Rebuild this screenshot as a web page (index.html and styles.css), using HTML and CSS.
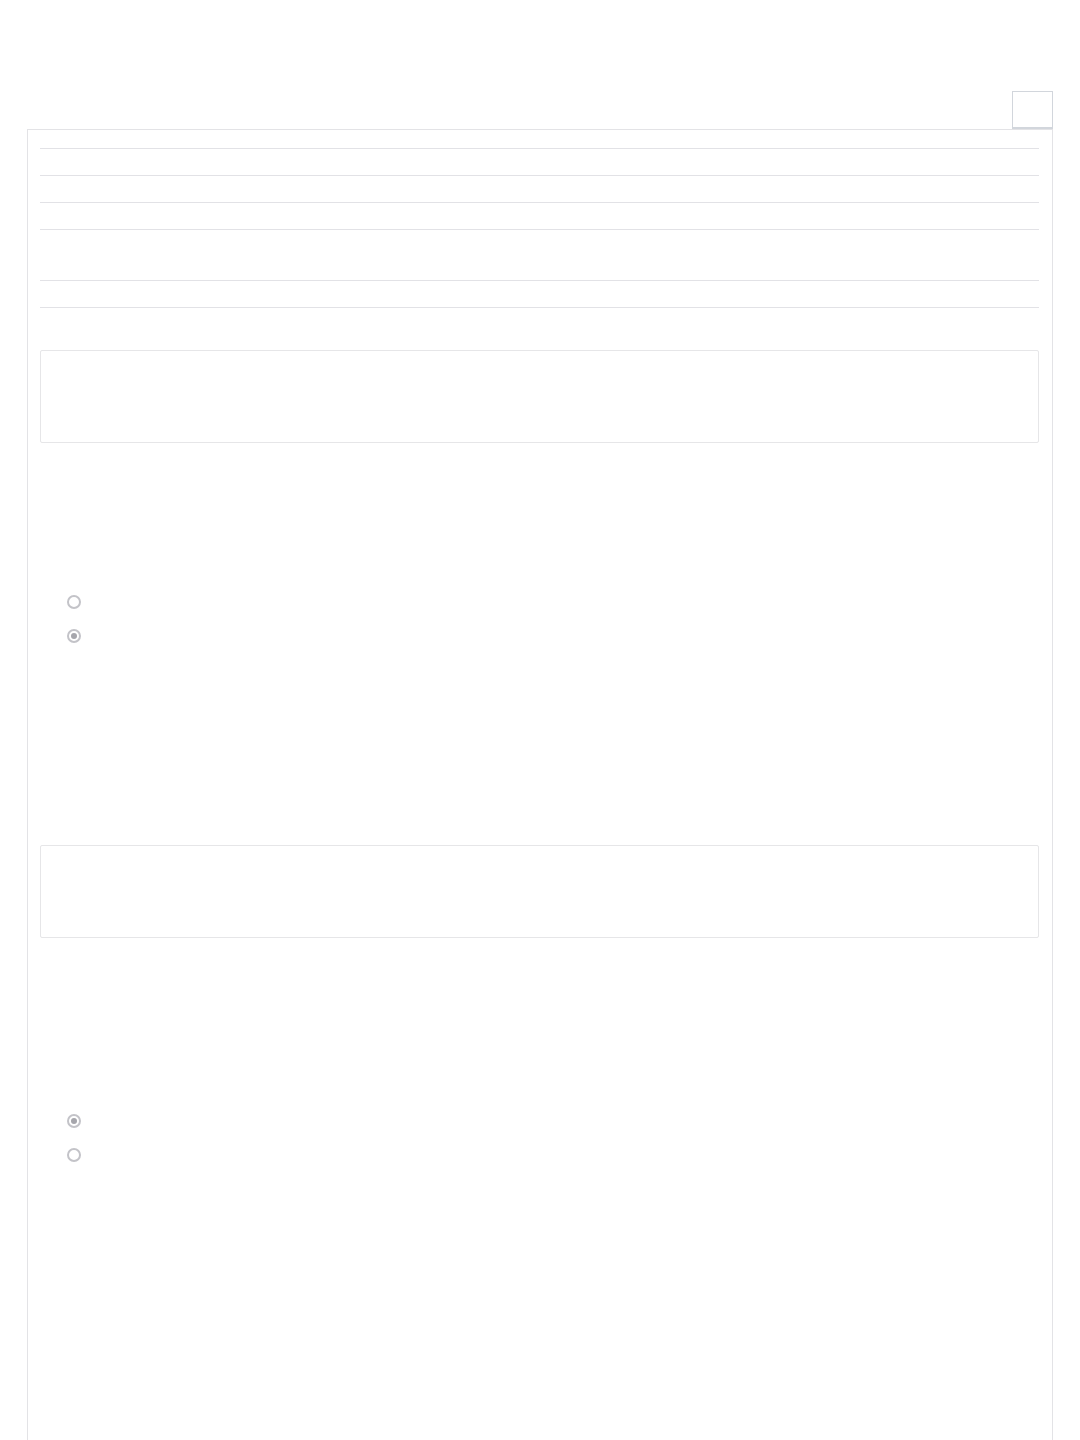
FILE: index.html
```html
<!DOCTYPE html>
<html lang="en">
<head>
	<meta charset="UTF-8">
	<meta name="viewport" content="width=device-width, initial-scale=1.0">
	<title>Form</title>
	<link rel="stylesheet" href="styles.css">
</head>
<body>
	<div class="tabs">
		<div class="tab"></div>
	</div>

	<div class="panel">
		<div class="rows">
			<div class="row row-head"></div>
			<div class="row"></div>
			<div class="row"></div>
			<div class="row"></div>
			<div class="row row-tall"></div>
			<div class="row"></div>
		</div>

		<div class="box"></div>

		<div class="choices first">
			<label class="choice"><input type="radio" name="q1" disabled></label>
			<label class="choice"><input type="radio" name="q1" checked disabled></label>
		</div>

		<div class="box box-second"></div>

		<div class="choices second">
			<label class="choice"><input type="radio" name="q2" checked disabled></label>
			<label class="choice"><input type="radio" name="q2" disabled></label>
		</div>
	</div>
</body>
</html>
```

FILE: styles.css
```css
*,
*::before,
*::after {
	box-sizing: border-box;
}
body {
	margin: 0;
	background: #fff;
	font-family: "Liberation Sans", Arial, sans-serif;
	font-size: 14px;
}

.tabs {
	display: flex;
	justify-content: flex-end;
	padding: 91px 27px 0;
}
.tab {
	width: 41px;
	height: 38px;
	border: 1px solid #d2d6dc;
	border-bottom-width: 2px;
	background: #fff;
}

.panel {
	margin: 0 27px;
	padding: 0 13px 0 12px;
	min-height: 1400px;
	border: 1px solid #e3e3e6;
	border-bottom: none;
}

.row {
	height: 27px;
	border-bottom: 1px solid #e2e2e6;
}
.row-head {
	height: 19px;
}
.row-tall {
	height: 51px;
}

.box {
	height: 93px;
	margin-top: 42px;
	border: 1px solid #e6e6e8;
	border-radius: 2px;
}

.choices {
	display: flex;
	flex-direction: column;
	gap: 20px;
	padding-left: 27px;
}
.choices.first {
	margin-top: 152px;
	margin-bottom: 202px;
}
.choices.second {
	margin-top: 176px;
}
.choice {
	display: flex;
	height: 14px;
}

/* disabled radio, drawn by hand so the ring is as thick as in the mockup */
.choice input {
	appearance: none;
	display: grid;
	place-items: center;
	width: 14px;
	height: 14px;
	margin: 0;
	border: 2px solid #c3c3c8;
	border-radius: 50%;
	background: #fff;
}
.choice input:checked::after {
	content: "";
	width: 6px;
	height: 6px;
	border-radius: 50%;
	background: #a6a6ac;
}
```
